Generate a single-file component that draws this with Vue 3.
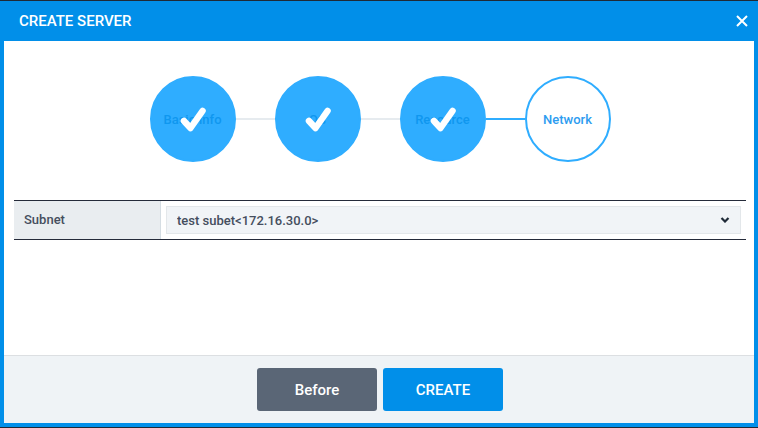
<script setup>
const steps = [
  { label: 'Basic Info', done: true },
  { label: 'OS', done: true },
  { label: 'Resource', done: true },
  { label: 'Network', done: false }
]
</script>

<template>
  <div class="modal">
    <header class="head">
      <h1 class="title">CREATE SERVER</h1>
      <button class="close" aria-label="Close">
        <svg width="12" height="12" viewBox="0 0 12 12"><path d="M1 1 L11 11 M11 1 L1 11" stroke="#fff" stroke-width="2" fill="none" /></svg>
      </button>
    </header>
    <main class="body">
      <div class="steps">
        <template v-for="(s, i) in steps" :key="s.label">
          <span v-if="i > 0" class="line" :class="{ on: i === 3 }"></span>
          <div class="step" :class="{ done: s.done }">
            <span class="lbl">{{ s.label }}</span>
            <svg v-if="s.done" class="check" width="30" height="28" viewBox="0 0 30 28">
              <path d="M5 15 L11.500 22 L23.500 5" stroke="#fff" stroke-width="6.500" stroke-linecap="round" stroke-linejoin="round" fill="none" />
            </svg>
          </div>
        </template>
      </div>
      <div class="row">
        <div class="key">Subnet</div>
        <div class="val">
          <select class="sel"><option>test subet&lt;172.16.30.0&gt;</option></select>
          <svg class="chev" width="10" height="6" viewBox="0 0 10 6"><path d="M1.500 1 L5 4.500 L8.500 1" stroke="#1f2a37" stroke-width="2.200" fill="none" /></svg>
        </div>
      </div>
    </main>
    <footer class="foot">
      <button class="btn gray">Before</button>
      <button class="btn blue">CREATE</button>
    </footer>
  </div>
</template>

<style>
html, body { margin: 0; padding: 0; background: #fff; }
</style>

<style scoped>
.modal {
  box-sizing: border-box;
  width: 758px;
  height: 428px;
  display: flex;
  flex-direction: column;
  background: #018fe9;
  border-top: 1px solid #1f2a37;
  border-bottom: 1px solid #1f2a37;
  padding: 0 4px 4px;
  font-family: Roboto, "Liberation Sans", sans-serif;
}
.head {
  height: 40px;
  flex: none;
  display: flex;
  align-items: center;
  justify-content: space-between;
  padding: 0 6px 0 15px;
}
.title { margin: 0; color: #fff; font-size: 15px; font-weight: 500; }
.close { border: 0; background: none; padding: 0; width: 12px; height: 12px; display: flex; }
.body { flex: 1; background: #fff; padding: 35px 8px 0 10px; min-height: 0; }
.steps { display: flex; align-items: center; justify-content: center; }
.step {
  box-sizing: border-box;
  width: 86px;
  height: 86px;
  border-radius: 50%;
  border: 2px solid #2fadff;
  background: #fff;
  position: relative;
  display: flex;
  align-items: center;
  justify-content: center;
  flex: none;
}
.step.done { background: #2fadff; }
.lbl { font-size: 13px; font-weight: 500; color: #2d9cf0; white-space: nowrap; }
.step.done .lbl { color: #0f97ef; }
.check { position: absolute; left: 27px; top: 28px; }
.line { width: 39px; height: 2px; background: #e6ebef; flex: none; }
.line.on { background: #2fadff; }
.row {
  margin-top: 38px;
  display: flex;
  height: 40px;
  box-sizing: border-box;
  border-top: 1px solid #252b3a;
  border-bottom: 1px solid #252b3a;
}
.key {
  width: 147px;
  box-sizing: border-box;
  background: #e9edf0;
  border-right: 1px solid #d5dde3;
  padding: 0 0 2px 10px;
  font-size: 13px;
  font-weight: 500;
  color: #454e5e;
  display: flex;
  align-items: center;
}
.val { flex: 1; padding: 5px 5px 0 5px; position: relative; }
.sel {
  display: block;
  appearance: none;
  box-sizing: border-box;
  width: 100%;
  height: 28px;
  background-color: #f1f4f7;
  border: 1px solid #e3e7ea;
  border-radius: 0;
  color: #454e5e;
  font-family: Roboto, "Liberation Sans", sans-serif;
  font-size: 13px;
  font-weight: 500;
  padding: 0 10px;
  outline: none;
}
.chev { position: absolute; right: 16px; top: 16px; }
.foot {
  flex: none;
  height: 68px;
  box-sizing: border-box;
  background: #eff3f6;
  border-top: 1px solid #dcdfe2;
  display: flex;
  justify-content: center;
  gap: 6px;
  padding: 12px 0 0 2px;
}
.btn {
  width: 120px;
  height: 43px;
  border: 0;
  border-radius: 3px;
  color: #fff;
  font-family: Roboto, "Liberation Sans", sans-serif;
  font-size: 15px;
  font-weight: 500;
}
.gray { background: #5a6676; }
.blue { background: #018fe9; }
</style>
